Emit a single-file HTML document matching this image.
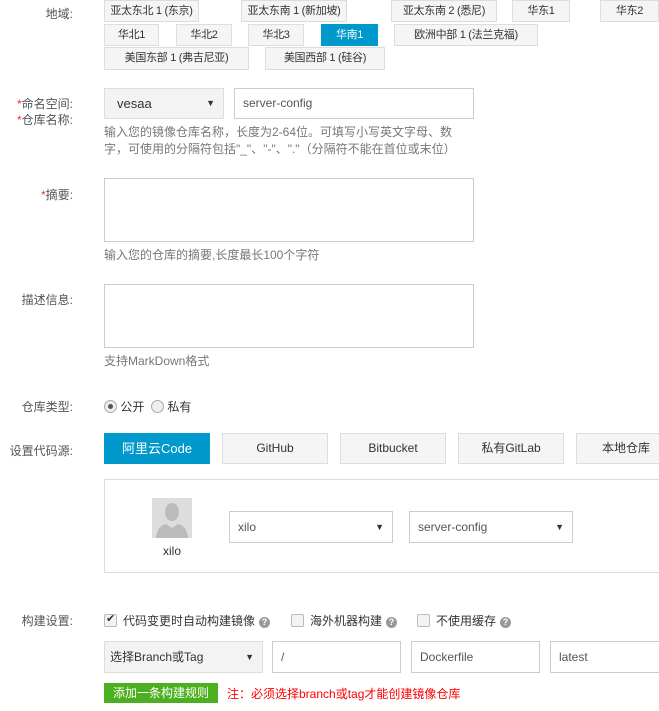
<!DOCTYPE html><html><head><meta charset="utf-8"><style>
body{margin:0;width:659px;height:711px;overflow:hidden;background:#fff;font-family:"Liberation Sans","Noto Sans CJK SC",sans-serif;font-size:12px;color:#333;position:relative}
.a{position:absolute;box-sizing:border-box}
.b{border:1px solid #ddd;background:#f5f5f5;text-align:center;color:#333;line-height:20px;white-space:nowrap;overflow:hidden;font-size:11px;letter-spacing:-0.3px}
.l{position:absolute;right:586px;color:#555;white-space:nowrap}
.r{color:#e33}
.in{border:1px solid #ccc;background:#fff;padding-left:8px;color:#555}
.h{color:#777;line-height:17px}
.cb{display:inline-block;width:11px;height:11px;border:1px solid #bbb;background:#f3f3f3;border-radius:2px;vertical-align:-2px;margin-right:6px;position:relative}
.q{display:inline-block;width:11px;height:11px;border-radius:50%;background:#999;color:#fff;font-size:9px;line-height:11px;text-align:center;font-weight:bold;margin-left:4px;vertical-align:0px}
.tri{position:absolute;right:8px;font-size:9px;color:#333}
.big{border:1px solid #ddd;background:#f5f5f5;text-align:center;line-height:29px;white-space:nowrap}
</style></head><body>
<div class="l" style="top:5px">地域:</div>
<div class="a b" style="left:104px;top:0;width:95px;height:22px">亚太东北 1 (东京)</div>
<div class="a b" style="left:241px;top:0;width:106px;height:22px">亚太东南 1 (新加坡)</div>
<div class="a b" style="left:391px;top:0;width:106px;height:22px">亚太东南 2 (悉尼)</div>
<div class="a b" style="left:512px;top:0;width:58px;height:22px">华东1</div>
<div class="a b" style="left:600px;top:0;width:59px;height:22px">华东2</div>
<div class="a b" style="left:104px;top:24px;width:55px;height:22px">华北1</div>
<div class="a b" style="left:176px;top:24px;width:56px;height:22px">华北2</div>
<div class="a b" style="left:248px;top:24px;width:56px;height:22px">华北3</div>
<div class="a b" style="left:321px;top:24px;width:57px;height:22px;background:#0099cc;border-color:#0099cc;color:#fff">华南1</div>
<div class="a b" style="left:394px;top:24px;width:144px;height:22px">欧洲中部 1 (法兰克福)</div>
<div class="a b" style="left:104px;top:47px;width:145px;height:23px">美国东部 1 (弗吉尼亚)</div>
<div class="a b" style="left:265px;top:47px;width:120px;height:23px">美国西部 1 (硅谷)</div>

<div class="l" style="top:95px"><span class="r">*</span>命名空间:</div>
<div class="l" style="top:111px"><span class="r">*</span>仓库名称:</div>
<div class="a" style="left:104px;top:88px;width:120px;height:31px;border:1px solid #ddd;background:#f3f3f3;line-height:29px;padding-left:12px;font-size:13px">vesaa<span class="tri" style="top:0">▼</span></div>
<div class="a in" style="left:234px;top:88px;width:240px;height:31px;line-height:29px">server-config</div>
<div class="a h" style="left:104px;top:124px;width:360px">输入您的镜像仓库名称，长度为2-64位。可填写小写英文字母、数字，可使用的分隔符包括"_"、"-"、"."（分隔符不能在首位或末位）</div>

<div class="l" style="top:186px"><span class="r">*</span>摘要:</div>
<div class="a in" style="left:104px;top:178px;width:370px;height:64px"></div>
<div class="a h" style="left:104px;top:247px">输入您的仓库的摘要,长度最长100个字符</div>

<div class="l" style="top:291px">描述信息:</div>
<div class="a in" style="left:104px;top:284px;width:370px;height:64px"></div>
<div class="a h" style="left:104px;top:353px">支持MarkDown格式</div>

<div class="l" style="top:398px">仓库类型:</div>
<div class="a" style="left:104px;top:398px;white-space:nowrap"><span style="display:inline-block;width:11px;height:11px;border:1px solid #aaa;border-radius:50%;vertical-align:-2px;background:#eee;position:relative"><span style="position:absolute;left:3px;top:3px;width:5px;height:5px;border-radius:50%;background:#555"></span></span> 公开 &nbsp;<span style="display:inline-block;width:11px;height:11px;border:1px solid #aaa;border-radius:50%;vertical-align:-2px;background:#eee"></span> 私有</div>

<div class="l" style="top:442px">设置代码源:</div>
<div class="a big" style="left:104px;top:433px;width:106px;height:31px;background:#0099cc;border-color:#0099cc;color:#fff;font-size:13px">阿里云Code</div>
<div class="a big" style="left:222px;top:433px;width:106px;height:31px">GitHub</div>
<div class="a big" style="left:340px;top:433px;width:106px;height:31px">Bitbucket</div>
<div class="a big" style="left:458px;top:433px;width:106px;height:31px">私有GitLab</div>
<div class="a big" style="left:576px;top:433px;width:100px;height:31px">本地仓库</div>

<div class="a" style="left:104px;top:479px;width:570px;height:94px;border:1px solid #ddd"></div>
<div class="a" style="left:152px;top:498px;width:40px;height:40px;background:#ddd;overflow:hidden"><svg width="40" height="40"><ellipse cx="20" cy="14" rx="7" ry="9" fill="#bbb"/><path d="M4 40 Q5 28 14 26 L20 30 L26 26 Q35 28 36 40Z" fill="#bbb"/></svg></div>
<div class="a" style="left:152px;top:544px;width:40px;text-align:center">xilo</div>
<div class="a in" style="left:229px;top:511px;width:164px;height:32px;line-height:30px">xilo<span class="tri">▼</span></div>
<div class="a in" style="left:409px;top:511px;width:164px;height:32px;line-height:30px">server-config<span class="tri">▼</span></div>

<div class="l" style="top:612px">构建设置:</div>
<div class="a" style="left:104px;top:612px;white-space:nowrap"><span class="cb"><span style="position:absolute;left:1px;top:-3px;font-size:11px">✔</span></span>代码变更时自动构建镜像<span class="q">?</span></div>
<div class="a" style="left:291px;top:612px;white-space:nowrap"><span class="cb"></span>海外机器构建<span class="q">?</span></div>
<div class="a" style="left:417px;top:612px;white-space:nowrap"><span class="cb"></span>不使用缓存<span class="q">?</span></div>

<div class="a" style="left:104px;top:641px;width:159px;height:32px;border:1px solid #ddd;background:#f3f3f3;line-height:30px;padding-left:5px">选择Branch或Tag<span class="tri">▼</span></div>
<div class="a in" style="left:272px;top:641px;width:129px;height:32px;line-height:30px">/</div>
<div class="a in" style="left:411px;top:641px;width:129px;height:32px;line-height:30px">Dockerfile</div>
<div class="a in" style="left:550px;top:641px;width:120px;height:32px;line-height:30px">latest</div>

<div class="a" style="left:104px;top:683px;width:114px;height:20px;background:#4caf1f;color:#fff;text-align:center;line-height:20px">添加一条构建规则</div>
<div class="a" style="left:227px;top:685px;color:#f00;white-space:nowrap">注：必须选择branch或tag才能创建镜像仓库</div>
</body></html>
